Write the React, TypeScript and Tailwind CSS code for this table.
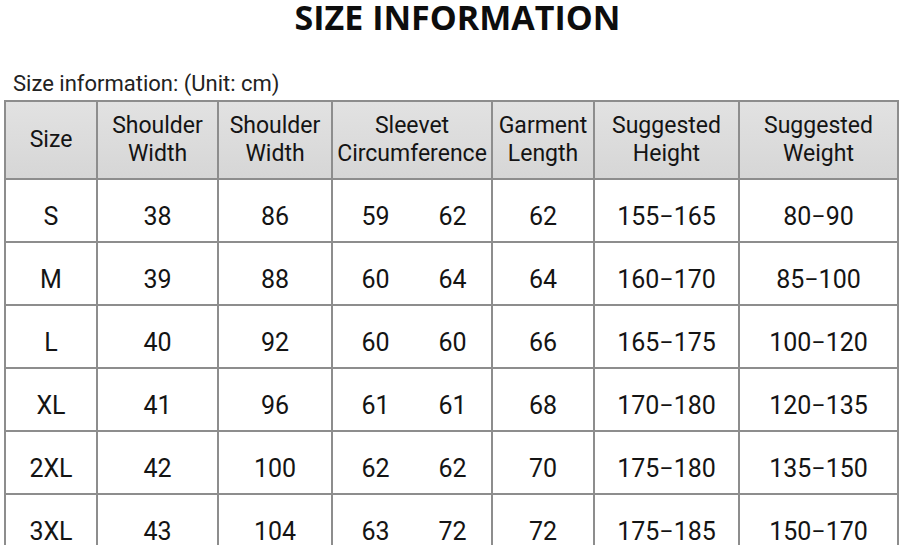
const COLS = "grid-cols-[92px_121px_114px_160px_102px_145px_159px]";

interface Row {
  size: string;
  shoulder: string;
  shoulder2: string;
  sleeve: [string, string];
  length: string;
  height: string;
  weight: string;
}

const ROWS: Row[] = [
  { size: "S", shoulder: "38", shoulder2: "86", sleeve: ["59", "62"], length: "62", height: "155−165", weight: "80−90" },
  { size: "M", shoulder: "39", shoulder2: "88", sleeve: ["60", "64"], length: "64", height: "160−170", weight: "85−100" },
  { size: "L", shoulder: "40", shoulder2: "92", sleeve: ["60", "60"], length: "66", height: "165−175", weight: "100−120" },
  { size: "XL", shoulder: "41", shoulder2: "96", sleeve: ["61", "61"], length: "68", height: "170−180", weight: "120−135" },
  { size: "2XL", shoulder: "42", shoulder2: "100", sleeve: ["62", "62"], length: "70", height: "175−180", weight: "135−150" },
  { size: "3XL", shoulder: "43", shoulder2: "104", sleeve: ["63", "72"], length: "72", height: "175−185", weight: "150−170" },
];

const HEADERS = [
  ["Size"],
  ["Shoulder", "Width"],
  ["Shoulder", "Width"],
  ["Sleevet", "Circumference"],
  ["Garment", "Length"],
  ["Suggested", "Height"],
  ["Suggested", "Weight"],
];

function Cell({ children }: { children: React.ReactNode }) {
  return (
    <div className="h-[63px] flex items-center justify-center pt-[12px] border-r-2 border-b-2 border-[#8d8d8d]">
      {children}
    </div>
  );
}

export default function App() {
  return (
    <div className="w-[901px] h-[545px] overflow-hidden bg-white text-[#141414] font-['Roboto',sans-serif]">
      <div className="h-[64px] pt-[2px]">
        <h1 className="text-center pl-[14px] text-[34px] leading-[30px] font-bold font-['Open_Sans',sans-serif] text-[#0d0d0d]">
          SIZE INFORMATION
        </h1>
      </div>
      <div className="pl-[13px] h-[36px] text-[22px] leading-[22px] pt-[9px] text-[#222]">
        Size information: (Unit: cm)
      </div>
      <div className={`ml-[4px] w-[895px] grid ${COLS} border-l-2 border-t-2 border-[#8d8d8d]`}>
        {HEADERS.map((lines, i) => (
          <div
            key={i}
            className="h-[78px] flex flex-col items-center justify-center bg-gradient-to-b from-[#e2e2e2] to-[#d6d6d6] border-r-2 border-b-2 border-[#8d8d8d] text-[23px] leading-[28px] text-center"
          >
            {lines.map((l) => (
              <span key={l}>{l}</span>
            ))}
          </div>
        ))}
        {ROWS.map((r) => (
          <div key={r.size} className="contents text-[25px]">
            <Cell>{r.size}</Cell>
            <Cell>{r.shoulder}</Cell>
            <Cell>{r.shoulder2}</Cell>
            <Cell>
              <div className="w-full grid grid-cols-2">
                <span className="text-center pl-[6px]">{r.sleeve[0]}</span>
                <span className="text-center pl-[2px]">{r.sleeve[1]}</span>
              </div>
            </Cell>
            <Cell>{r.length}</Cell>
            <Cell>{r.height}</Cell>
            <Cell>{r.weight}</Cell>
          </div>
        ))}
      </div>
    </div>
  );
}
